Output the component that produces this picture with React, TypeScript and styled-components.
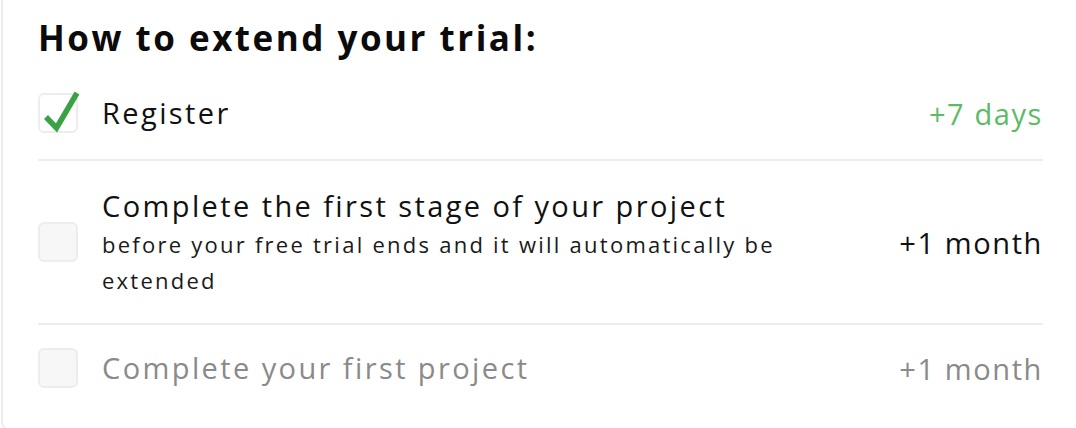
import styled, { createGlobalStyle } from "styled-components";

const GlobalStyle = createGlobalStyle`
    html, body {
        margin:0;
        padding:0;
        background:#ffffff;
        overflow:hidden;
    }
    body {
        font-family: "Open Sans", "Lato", sans-serif;
        color:#111111;
    }
`;

const Card = styled.section`
    box-sizing:border-box;
    width:1110px;
    margin:-10px 0 0 1px;
    padding:23px 35px 14px 35px;
    border:2px solid #ececec;
    border-radius:9px;
    background:#ffffff;
`;

const Heading = styled.h2`
    margin:0 0 8px 0;
    font-size:35px;
    line-height:46px;
    font-weight:700;
    letter-spacing:2.5px;
    color:#0b0b0b;
`;

const List = styled.ul`
    list-style:none;
    margin:0;
    padding:0;
    width:1005px;
`;

const Row = styled.li`
    display:flex;
    align-items:center;
    gap:24px;
    padding:25px 0;
    border-top:2px solid #ececec;
    &:first-child{
        border-top:none;
        padding-top:24px;
        padding-bottom:26px;
    }
    &:last-child{
        padding-top:23px;
        padding-bottom:27px;
    }
`;

const Box = styled.span<{ $checked?: boolean }>`
    position:relative;
    flex:0 0 auto;
    box-sizing:border-box;
    width:40px;
    height:40px;
    border:2px solid #ededed;
    border-radius:6px;
    background:${p => p.$checked ? "#ffffff" : "#f7f7f7"};
`;

const Tick = styled.svg`
    position:absolute;
    left:2px;
    top:-5px;
    overflow:visible;
`;

const Body = styled.div`
    flex:1;
    display:flex;
    flex-direction:column;
`;

const Label = styled.span<{ $muted?: boolean }>`
    font-size:29px;
    line-height:40px;
    letter-spacing:2.4px;
    color:${p => p.$muted ? "#8a8a8a" : "#111111"};
`;

const Note = styled.span`
    font-size:22px;
    line-height:36px;
    letter-spacing:2.25px;
    color:#1a1a1a;
    max-width:700px;
`;

const Reward = styled.span<{ $tone: "done" | "open" | "muted" }>`
    flex:0 0 auto;
    font-size:29px;
    letter-spacing:1.6px;
    color:${p => p.$tone === "done" ? "#5cbb63" : p.$tone === "muted" ? "#8a8a8a" : "#111111"};
`;

type Step = {
    title: string;
    note?: string;
    reward: string;
    state: "done" | "open" | "muted";
};

const steps: Step[] = [
    { title: "Register", reward: "+7 days", state: "done" },
    {
        title: "Complete the first stage of your project",
        note: "before your free trial ends and it will automatically be extended",
        reward: "+1 month",
        state: "open",
    },
    { title: "Complete your first project", reward: "+1 month", state: "muted" },
];

function CheckBox({ checked }: { checked: boolean }) {
    return (
        <Box $checked={checked}>
            {checked && (
                <Tick width="36" height="44" viewBox="0 0 36 44">
                    <path d="M4 27 L14.5 38 L35 3" fill="none" stroke="#3aa244" strokeWidth="5.5" strokeLinejoin="miter" />
                </Tick>
            )}
        </Box>
    );
}

export default function App() {
    return (
        <>
            <GlobalStyle />
            <Card>
                <Heading>How to extend your trial:</Heading>
                <List>
                    {steps.map(step => (
                        <Row key={step.title}>
                            <CheckBox checked={step.state === "done"} />
                            <Body>
                                <Label $muted={step.state === "muted"}>{step.title}</Label>
                                {step.note && <Note>{step.note}</Note>}
                            </Body>
                            <Reward $tone={step.state}>{step.reward}</Reward>
                        </Row>
                    ))}
                </List>
            </Card>
        </>
    );
}
